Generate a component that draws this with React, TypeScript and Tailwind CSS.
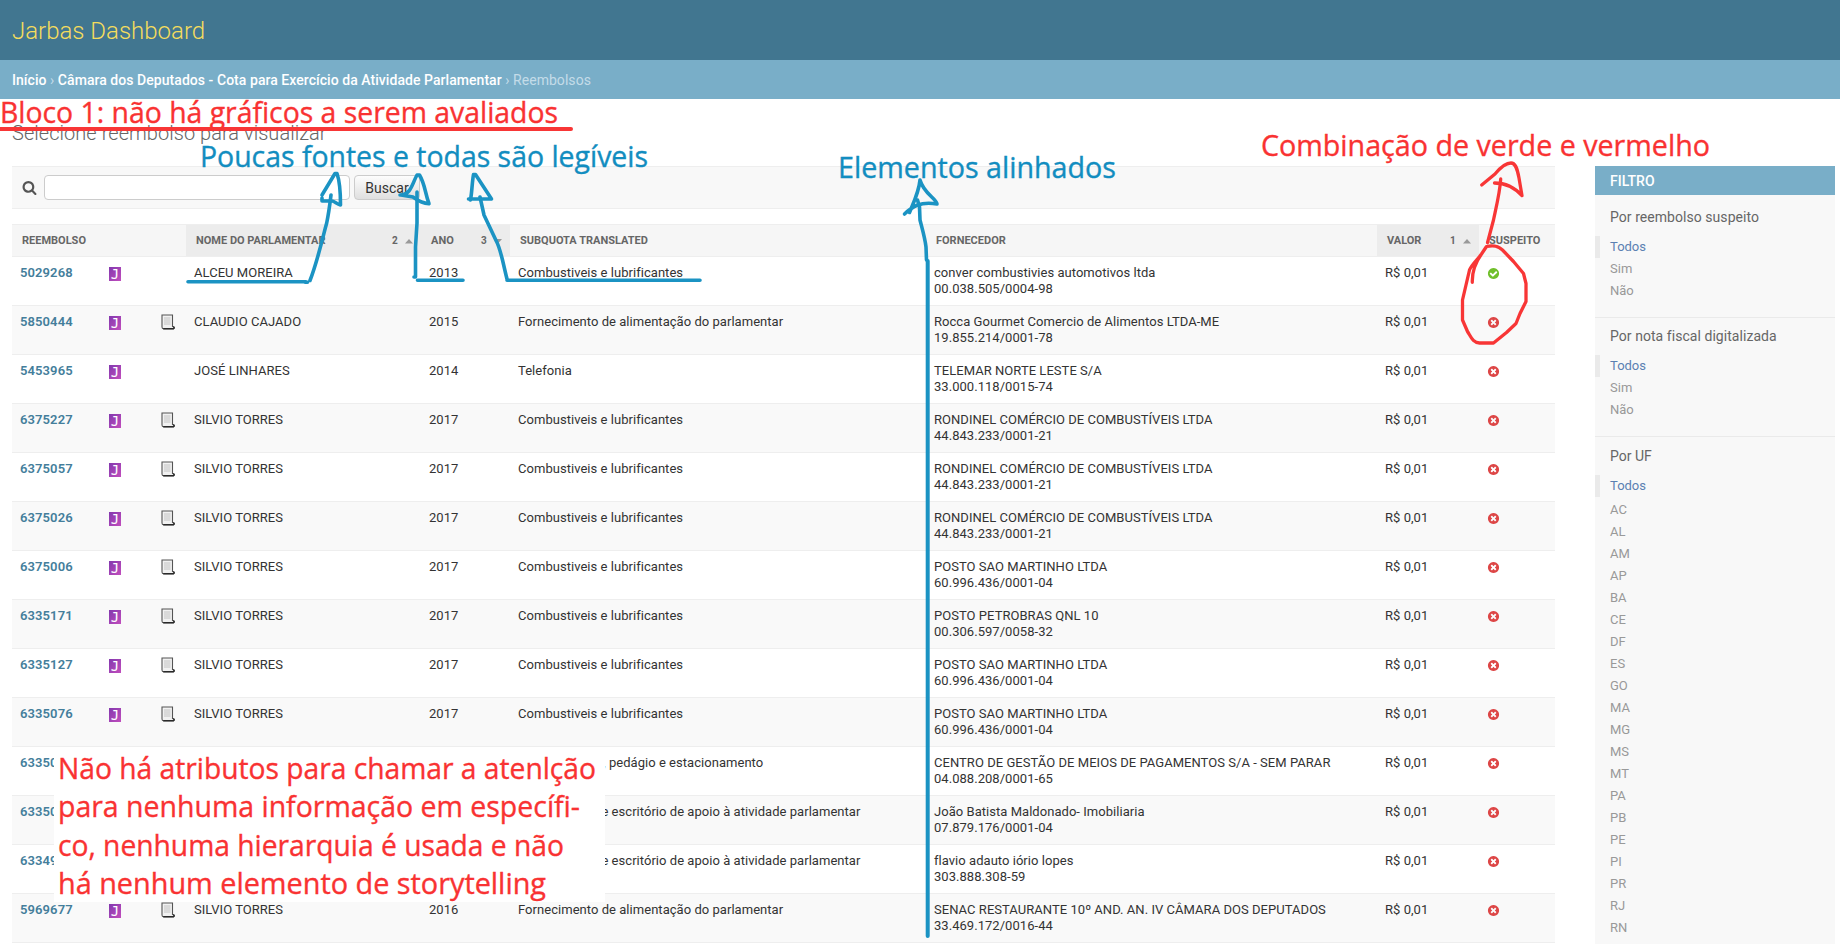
import React from "react";

const YES =
  "M1412 734q0-28-18-46l-91-90q-19-19-45-19t-45 19l-408 407-226-226q-19-19-45-19t-45 19l-91 90q-18 18-18 46 0 27 18 45l362 362q19 19 45 19 27 0 46-19l543-543q18-18 18-45zm252 162q0 209-103 385.5t-279.5 279.5-385.5 103-385.5-103-279.5-279.5-103-385.5 103-385.5 279.5-279.5 385.5-103 385.5 103 279.5 279.5 103 385.5z";
const NO =
  "M1277 1122q0-26-19-45l-181-181 181-181q19-19 19-45 0-27-19-46l-90-90q-19-19-46-19-26 0-45 19l-181 181-181-181q-19-19-45-19-27 0-46 19l-90 90q-19 19-19 46 0 26 19 45l181 181-181 181q-19 19-19 45 0 27 19 46l90 90q19 19 46 19 26 0 45-19l181-181 181 181q19 19 45 19 27 0 46-19l90-90q19-19 19-46zm387-226q0 209-103 385.5t-279.5 279.5-385.5 103-385.5-103-279.5-279.5-103-385.5 103-385.5 279.5-279.5 385.5-103 385.5 103 279.5 279.5 103 385.5z";
const SEARCH =
  "M1216 832q0-185-131.5-316.5t-316.5-131.5-316.5 131.5-131.5 316.5 131.5 316.5 316.5 131.5 316.5-131.5 131.5-316.5zm512 832q0 52-38 90t-90 38q-54 0-90-38l-343-342q-179 124-399 124-143 0-273.5-55.5t-225-150-150-225-55.5-273.5 55.5-273.5 150-225 225-150 273.5-55.5 273.5 55.5 225 150 150 225 55.5 273.5q0 220-124 399l343 343q37 37 37 90z";

type Row = {
  id: string;
  receipt?: boolean;
  name?: string;
  year?: string;
  subquota: string;
  supplier: string;
  doc: string;
  suspicious?: boolean;
};

const FUEL = "Combustiveis e lubrificantes";
const FOOD = "Fornecimento de alimentação do parlamentar";
const OFFICE = "Manutenção de escritório de apoio à atividade parlamentar";

const ROWS: Row[] = [
  { id: "5029268", name: "ALCEU MOREIRA", year: "2013", subquota: FUEL, supplier: "conver combustivies automotivos ltda", doc: "00.038.505/0004-98", suspicious: true },
  { id: "5850444", receipt: true, name: "CLAUDIO CAJADO", year: "2015", subquota: FOOD, supplier: "Rocca Gourmet Comercio de Alimentos LTDA-ME", doc: "19.855.214/0001-78" },
  { id: "5453965", name: "JOSÉ LINHARES", year: "2014", subquota: "Telefonia", supplier: "TELEMAR NORTE LESTE S/A", doc: "33.000.118/0015-74" },
  { id: "6375227", receipt: true, name: "SILVIO TORRES", year: "2017", subquota: FUEL, supplier: "RONDINEL COMÉRCIO DE COMBUSTÍVEIS LTDA", doc: "44.843.233/0001-21" },
  { id: "6375057", receipt: true, name: "SILVIO TORRES", year: "2017", subquota: FUEL, supplier: "RONDINEL COMÉRCIO DE COMBUSTÍVEIS LTDA", doc: "44.843.233/0001-21" },
  { id: "6375026", receipt: true, name: "SILVIO TORRES", year: "2017", subquota: FUEL, supplier: "RONDINEL COMÉRCIO DE COMBUSTÍVEIS LTDA", doc: "44.843.233/0001-21" },
  { id: "6375006", receipt: true, name: "SILVIO TORRES", year: "2017", subquota: FUEL, supplier: "POSTO SAO MARTINHO LTDA", doc: "60.996.436/0001-04" },
  { id: "6335171", receipt: true, name: "SILVIO TORRES", year: "2017", subquota: FUEL, supplier: "POSTO PETROBRAS QNL 10", doc: "00.306.597/0058-32" },
  { id: "6335127", receipt: true, name: "SILVIO TORRES", year: "2017", subquota: FUEL, supplier: "POSTO SAO MARTINHO LTDA", doc: "60.996.436/0001-04" },
  { id: "6335076", receipt: true, name: "SILVIO TORRES", year: "2017", subquota: FUEL, supplier: "POSTO SAO MARTINHO LTDA", doc: "60.996.436/0001-04" },
  { id: "63350", subquota: "Serviço de táxi, pedágio e estacionamento", supplier: "CENTRO DE GESTÃO DE MEIOS DE PAGAMENTOS S/A - SEM PARAR", doc: "04.088.208/0001-65" },
  { id: "63350", subquota: OFFICE, supplier: "João Batista Maldonado- Imobiliaria", doc: "07.879.176/0001-04" },
  { id: "63349", subquota: OFFICE, supplier: "flavio adauto iório lopes", doc: "303.888.308-59" },
  { id: "5969677", receipt: true, name: "SILVIO TORRES", year: "2016", subquota: FOOD, supplier: "SENAC RESTAURANTE 10º AND. AN. IV CÂMARA DOS DEPUTADOS", doc: "33.469.172/0016-44" },
];

const STATES = ["AC", "AL", "AM", "AP", "BA", "CE", "DF", "ES", "GO", "MA", "MG", "MS", "MT", "PA", "PB", "PE", "PI", "PR", "RJ", "RN"];

function ReceiptIcon() {
  return (
    <svg width="14" height="16" viewBox="0 0 14 16" className="block">
      <path d="M1 1H11.5V12.5C13.2 12.5 13.6 14.6 12 14.8H2.6C1.4 14.8 1 14 1 13Z" fill="#f1f1f1" stroke="#555" strokeWidth="1.1" />
      <path d="M2.2 14.7H12.4C13.6 14.4 13.4 12.8 12.2 12.6" fill="none" stroke="#2a2a2a" strokeWidth="1.4" />
      <path d="M3 4H9.5M3 6H9.5M3 8H9.5M3 10H9.5" stroke="#bdbdbd" strokeWidth="0.9" />
    </svg>
  );
}

function JarbasIcon() {
  return (
    <span className="flex h-[14px] w-3 items-center justify-center overflow-hidden bg-linear-to-br from-[#8338ae] to-[#c24dbd] font-['DejaVu_Sans_Mono',monospace] text-[14px] leading-none text-white">
      J
    </span>
  );
}

function Arrow({ down }: { down?: boolean }) {
  return (
    <svg width="8" height="5" viewBox="0 0 8 5" className="block">
      <path d={down ? "M0 0H8L4 4.5Z" : "M0 4.5H8L4 0Z"} fill="#999" />
    </svg>
  );
}

function SortHead({ label, order, down }: { label: string; order: string; down?: boolean }) {
  return (
    <th className="border-y border-[#eee] bg-[#ececec] p-0 text-left font-bold">
      <div className="flex h-[31px] items-center pt-px pr-2 pl-2.5">
        <span className="whitespace-nowrap">{label}</span>
        <span className="ml-auto w-[13px] text-[10px]">{order}</span>
        <Arrow down={down} />
      </div>
    </th>
  );
}

function Head({ label, span }: { label: string; span?: number }) {
  return (
    <th colSpan={span} className="border-y border-[#eee] bg-[#f6f6f6] p-0 text-left font-bold">
      <div className="flex h-[31px] items-center pt-px pl-2.5">{label}</div>
    </th>
  );
}

function Results() {
  return (
    <table className="w-[1543px] table-fixed border-separate border-spacing-0 text-[13px] leading-4 text-[#333]">
      <colgroup>
        <col className="w-[89px]" />
        <col className="w-[52px]" />
        <col className="w-[33px]" />
        <col className="w-[235px]" />
        <col className="w-[89px]" />
        <col className="w-[416px]" />
        <col className="w-[451px]" />
        <col className="w-[102px]" />
        <col className="w-[76px]" />
      </colgroup>
      <thead className="text-[11px] text-[#666]">
        <tr>
          <Head label="REEMBOLSO" span={3} />
          <SortHead label="NOME DO PARLAMENTAR" order="2" />
          <SortHead label="ANO" order="3" down />
          <Head label="SUBQUOTA TRANSLATED" />
          <Head label="FORNECEDOR" />
          <SortHead label="VALOR" order="1" />
          <Head label="SUSPEITO" />
        </tr>
      </thead>
      <tbody className="tracking-[0.04px]">
        {ROWS.map((r, i) => (
          <tr key={i} className="odd:bg-white even:bg-[#f9f9f9] [&>td]:h-[49px] [&>td]:border-b [&>td]:border-[#eee] [&>td]:px-2 [&>td]:pt-2 [&>td]:align-top [&>td]:whitespace-nowrap">
            <td className="font-semibold tracking-[0.1px] text-[#447e9b]">{r.id}</td>
            <td><div className="pt-[2px]">{r.name && <JarbasIcon />}</div></td>
            <td>{r.receipt && <ReceiptIcon />}</td>
            <td>{r.name}</td>
            <td>{r.year}</td>
            <td>{r.subquota}</td>
            <td>
              {r.supplier}
              <br />
              {r.doc}
            </td>
            <td>R$ 0,01</td>
            <td>
              <svg width="13" height="13" viewBox="0 0 1792 1792" className="mt-[2px] block">
                <path d={r.suspicious ? YES : NO} fill={r.suspicious ? "#70bf2b" : "#dd4646"} />
              </svg>
            </td>
          </tr>
        ))}
      </tbody>
    </table>
  );
}

function Choice({ label, selected }: { label: string; selected?: boolean }) {
  return (
    <li className={selected ? "h-[22px] border-l-[5px] border-[#eaeaea] pl-2.5 text-[#5b80b2]" : "h-[22px] pl-[15px] text-[#999]"}>
      {label}
    </li>
  );
}

function Sidebar() {
  return (
    <aside className="h-[778px] w-[240px] shrink-0 overflow-hidden bg-[#f8f8f8] text-[13px] leading-[22px]">
      <h2 className="h-[29px] bg-[#79aec8] pl-[15px] text-[14px] leading-[30px] font-medium text-white">FILTRO</h2>
      {["Por reembolso suspeito", "Por nota fiscal digitalizada"].map((t) => (
        <section key={t} className="h-[119px] border-b border-[#eaeaea] first-of-type:h-[123px]">
          <h3 className={t === "Por reembolso suspeito" ? "h-[41px] pt-[11px] pl-[15px] text-[14px] tracking-[0.05px] text-[#666]" : "h-[37px] pt-[7px] pl-[15px] text-[14px] tracking-[0.05px] text-[#666]"}>{t}</h3>
          <ul>
            <Choice label="Todos" selected />
            <Choice label="Sim" />
            <Choice label="Não" />
          </ul>
        </section>
      ))}
      <section>
        <h3 className="h-[38px] pt-2 pl-[15px] text-[14px] text-[#666]">Por UF</h3>
        <ul>
          <Choice label="Todos" selected />
        </ul>
        <ul className="pt-[2px]">
          {STATES.map((s) => (
            <Choice key={s} label={s} />
          ))}
        </ul>
      </section>
    </aside>
  );
}

const NOTES = [
  { text: "Bloco 1: não há gráficos a serem avaliados", x: 0, y: 122.5, w: 558, blue: false },
  { text: "Poucas fontes e todas são legíveis", x: 200, y: 166.5, w: 448, blue: true },
  { text: "Elementos alinhados", x: 838, y: 177.5, w: 278, blue: true },
  { text: "Combinação de verde e vermelho", x: 1261, y: 155.5, w: 449, blue: false },
  { text: "Não há atributos para chamar a atenlção", x: 58, y: 778.5, w: 538, blue: false },
  { text: "para nenhuma informação em específi-", x: 58, y: 817, w: 522, blue: false },
  { text: "co, nenhuma hierarquia é usada e não", x: 58, y: 855.5, w: 506, blue: false },
  { text: "há nenhum elemento de storytelling", x: 58, y: 894, w: 488, blue: false },
];

function Annotations() {
  return (
    <svg width="1840" height="944" viewBox="0 0 1840 944" className="pointer-events-none absolute top-0 left-0">
      <rect x="54" y="750" width="551" height="152" fill="#fff" />
      <g fontFamily="'Open Sans', 'Noto Sans', sans-serif" fontSize="28.5" strokeWidth="0.35">
        {NOTES.map((n) => (
          <text key={n.text} x={n.x} y={n.y} textLength={n.w} lengthAdjust="spacingAndGlyphs" fill={n.blue ? "#128dc0" : "#f93232"} stroke={n.blue ? "#128dc0" : "#f93232"}>
            {n.text}
          </text>
        ))}
      </g>
      <g fill="none" stroke="#1b93c3" strokeWidth="3.6" strokeLinecap="round" strokeLinejoin="round">
        <path d="M188 281.7H306M305 282.2H307.5M310 280.5C318 260 324 232 326.7 223C329 212 330 203 331 195" />
        <path d="M322 195L335 173.5H337C340 182 340.5 190 340.5 205C337 204 334 201 332 201H322V198" />
        <path d="M417.5 280.3H463M414 277H415.5V247L417 223V192" />
        <path d="M400 195C411 195 412 184 417 175H419.5C425 184 425 193 429 203.7C420 203 416 199 413 197L401 195" />
        <path d="M507 280.3H700M507 279L506 275L502.5 260C500 250 499 246 496.5 241.5L484 215L480 197" />
        <path d="M470.5 200C472 192 472 183 473.5 174.5H475.5L491.5 199H468.5" />
        <path d="M926.5 260L926 247C925 238 922 228 920 220L919.5 207L917.5 200" />
        <path d="M904.5 214C912 207 920 201 937 204C936 198 924 194 920 180C919 192 913 204 909.5 212.5" />
        <path d="M927.7 261V936" strokeWidth="4" />
      </g>
      <g fill="none" stroke="#f83636" strokeWidth="3.3" strokeLinecap="round" strokeLinejoin="round">
        <path d="M0 129H571" strokeWidth="4" />
        <path d="M1487.5 242.7L1493.5 220C1496 208 1500 192 1500.7 179" />
        <path d="M1481.7 185L1495 174C1500 168 1506 163 1511 163C1515 163 1517 167 1519 178L1522 195.7C1516 189 1507 183 1494.5 183" />
        <path d="M1472.3 282.3C1472 272 1475 263 1481.5 254L1486.5 246.5C1494 245 1498 246 1502.5 250L1513.5 261.5L1523.5 273.5L1526 283.5V301.5L1520 313.5L1516 323.5L1506.5 332.5L1493.5 343H1479.5C1473 343 1471 337 1467.5 331.5L1462.5 320V300L1466 285L1469.5 270C1472 264 1478 259 1481.5 254" />
      </g>
    </svg>
  );
}

export default function App() {
  return (
    <div className="relative h-[944px] w-[1840px] overflow-hidden bg-white font-[Roboto,'Liberation_Sans',sans-serif]">
      <header className="flex h-[60px] items-center bg-[#417690] pl-3 text-[24px] font-light text-[#f5dd5d]">
        <span className="pt-px">Jarbas Dashboard</span>
      </header>
      <nav className="flex h-[39px] items-center bg-[#79aec8] pt-px pl-3 text-[14px] tracking-[0.05px] whitespace-pre text-[#c4dce8]">
        <span className="font-medium text-white">Início</span>
        <span> › </span>
        <span className="font-medium text-white">Câmara dos Deputados - Cota para Exercício da Atividade Parlamentar</span>
        <span> › Reembolsos</span>
      </nav>
      <div className="px-3 pt-5">
        <h1 className="h-[47px] text-[20px] leading-7 font-light tracking-[0.04px] text-[#666]">Selecione reembolso para visualizar</h1>
        <div className="flex gap-10">
          <main className="w-[1543px] shrink-0">
            <form className="mb-[15px] flex h-[43px] items-center border-y border-[#eee] bg-[#f8f8f8] pl-2.5">
              <svg width="15" height="15" viewBox="0 0 1792 1792">
                <path d={SEARCH} fill="#555" />
              </svg>
              <input className="ml-[7px] h-[25px] w-[306px] rounded border border-[#ccc] bg-white" />
              <button type="button" className="ml-1 h-[25px] w-[66px] rounded border border-[#ccc] bg-linear-to-b from-[#fdfdfd] to-[#dfdfdf] text-[14px] leading-none text-[#333]">
                Buscar
              </button>
            </form>
            <Results />
          </main>
          <Sidebar />
        </div>
      </div>
      <Annotations />
    </div>
  );
}
